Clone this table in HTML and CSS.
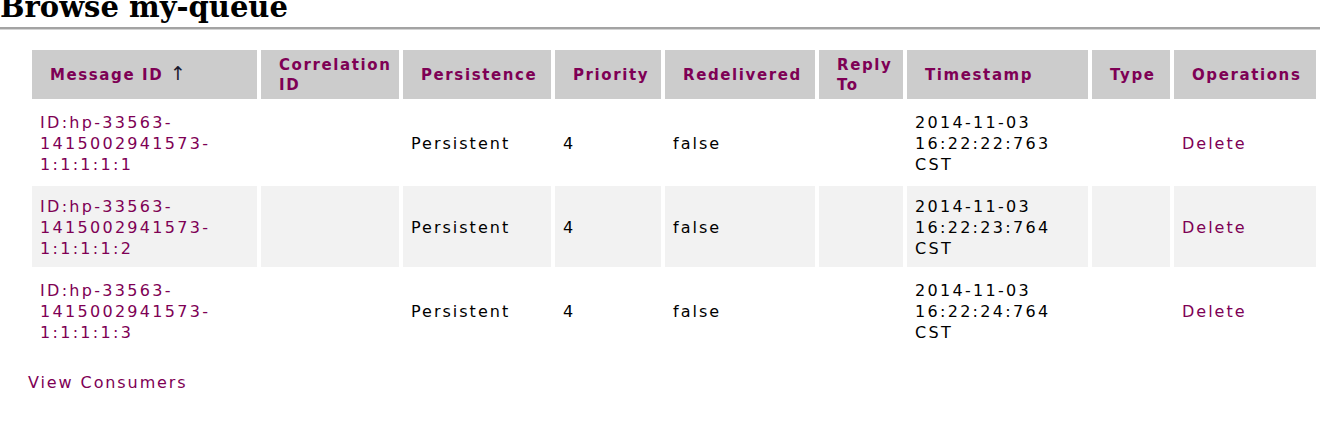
FILE: index.html
```html
<!DOCTYPE html>
<html>
<head>
<meta charset="utf-8">
<title>Browse my-queue</title>
<link rel="stylesheet" href="styles.css">
</head>
<body>
<div class="page">
  <h1 class="title">Browse my-queue</h1>
  <div class="rule"></div>
  <table class="messages">
    <thead>
      <tr>
        <th class="c-id"><a href="#">Message ID <span class="arrow">↑</span></a></th>
        <th class="c-corr"><a href="#">Correlation ID</a></th>
        <th class="c-pers"><a href="#">Persistence</a></th>
        <th class="c-prio"><a href="#">Priority</a></th>
        <th class="c-redel"><a href="#">Redelivered</a></th>
        <th class="c-reply"><a href="#">Reply To</a></th>
        <th class="c-time"><a href="#">Timestamp</a></th>
        <th class="c-type"><a href="#">Type</a></th>
        <th class="c-ops"><a href="#">Operations</a></th>
      </tr>
    </thead>
    <tbody>
      <tr>
        <td class="num"><a href="#">ID:hp-33563-1415002941573-1:1:1:1:1</a></td>
        <td></td>
        <td>Persistent</td>
        <td>4</td>
        <td>false</td>
        <td></td>
        <td class="num">2014-11-03 16:22:22:763 CST</td>
        <td></td>
        <td><a href="#">Delete</a></td>
      </tr>
      <tr class="alt">
        <td class="num"><a href="#">ID:hp-33563-1415002941573-1:1:1:1:2</a></td>
        <td></td>
        <td>Persistent</td>
        <td>4</td>
        <td>false</td>
        <td></td>
        <td class="num">2014-11-03 16:22:23:764 CST</td>
        <td></td>
        <td><a href="#">Delete</a></td>
      </tr>
      <tr>
        <td class="num"><a href="#">ID:hp-33563-1415002941573-1:1:1:1:3</a></td>
        <td></td>
        <td>Persistent</td>
        <td>4</td>
        <td>false</td>
        <td></td>
        <td class="num">2014-11-03 16:22:24:764 CST</td>
        <td></td>
        <td><a href="#">Delete</a></td>
      </tr>
    </tbody>
  </table>
  <div class="footer-link"><a href="#">View Consumers</a></div>
</div>
</body>
</html>
```
FILE: styles.css
```css
html, body {
  margin: 0;
  padding: 0;
  background: #ffffff;
}

body {
  font-family: "DejaVu Sans", Verdana, sans-serif;
  font-size: 16px;
  color: #000;
}

a {
  color: #7e0055;
  text-decoration: none;
}

.page {
  width: 1320px;
  overflow: hidden;
}

.title {
  margin: -7px 0 0 0;
  padding: 0 0 5px 0;
  font-family: "DejaVu Serif", Georgia, serif;
  font-weight: bold;
  font-size: 29px;
  line-height: 29px;
  color: #000;
}

.rule {
  height: 0;
  border-top: 2px solid #a3a3a3;
  border-bottom: 1px solid #d4d4d4;
}

.messages {
  margin: 17px 0 0 28px;
  border-collapse: separate;
  border-spacing: 4px 3px;
  table-layout: fixed;
  width: 1292px;
}

.messages th {
  box-sizing: border-box;
  height: 49px;
  padding: 4px 4px 4px 18px;
  background: #cccccc;
  text-align: left;
  vertical-align: middle;
  font-size: 15px;
  font-weight: bold;
  line-height: 20px;
  letter-spacing: 1.6px;
}

.messages th .arrow {
  color: #1a1a2e;
  font-size: 19px;
  font-weight: normal;
  letter-spacing: 0;
  line-height: 16px;
}

.c-id { width: 225px; }
.c-corr { width: 138px; }
.c-pers { width: 148px; }
.c-prio { width: 106px; }
.c-redel { width: 150px; }
.c-reply { width: 84px; }
.c-time { width: 181px; }
.c-type { width: 78px; }
.c-ops { width: 142px; }

.messages td {
  box-sizing: border-box;
  height: 81px;
  padding: 10px 6px 8px 8px;
  vertical-align: middle;
  line-height: 21px;
  letter-spacing: 2px;
}

.messages td.num {
  letter-spacing: 2.3px;
}

.messages tr.alt td {
  background: #f2f2f2;
}

.footer-link {
  margin: 18px 0 0 28px;
  line-height: 21px;
  letter-spacing: 1.9px;
}
```
